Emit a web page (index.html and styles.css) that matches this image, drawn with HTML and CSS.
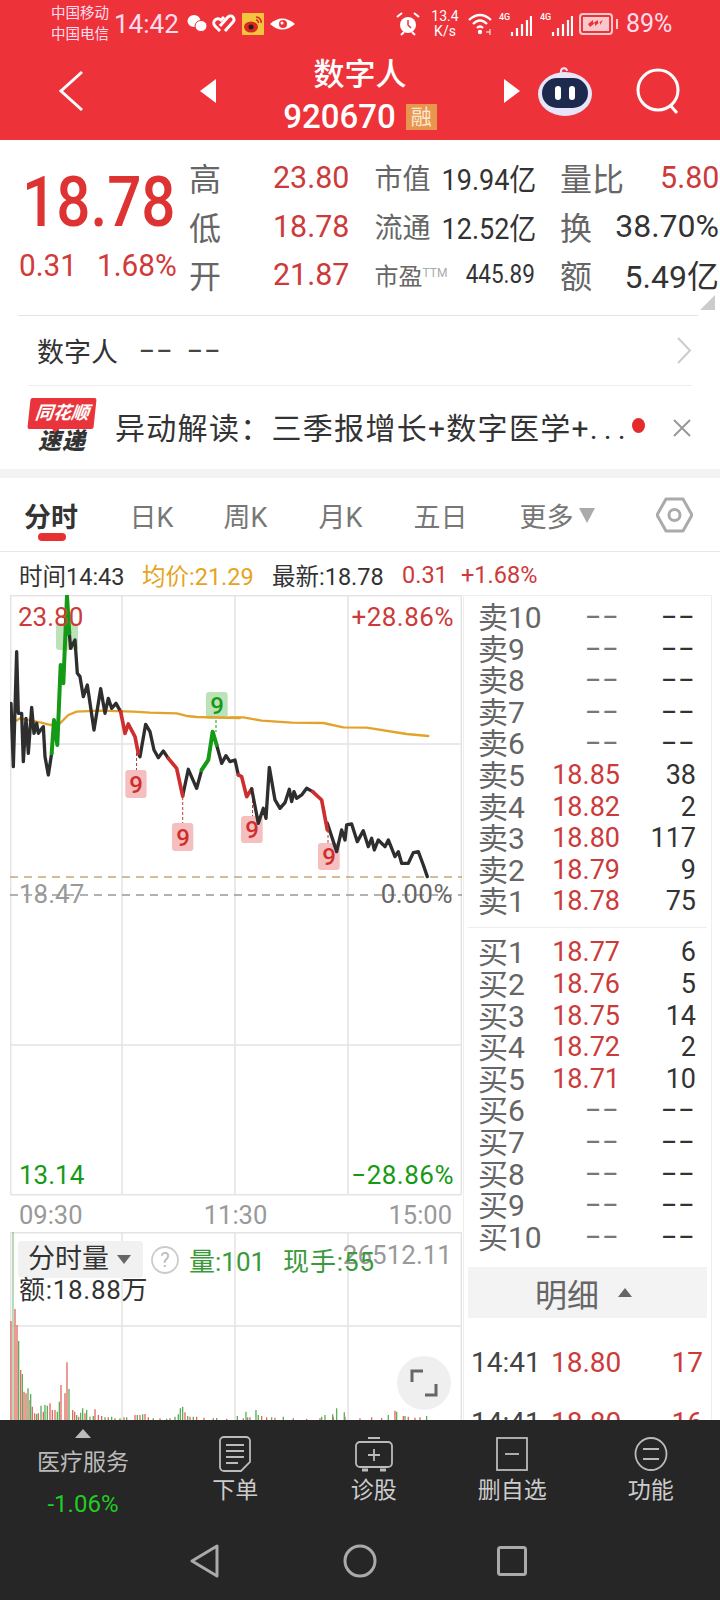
FILE: index.html
```html
<!DOCTYPE html>
<html lang="zh">
<head>
<meta charset="utf-8">
<title>数字人 920670</title>
<link rel="stylesheet" href="styles.css">
</head>
<body>
<div class="page">
<header class="top">
  <div class="status">
    <div class="carrier"><span>中国移动</span><span>中国电信</span></div>
    <span class="clock">14:42</span>
    <svg class="ic-left" width="112" height="24" viewBox="0 0 112 24">
      <ellipse cx="7" cy="9" rx="6.500" ry="6" fill="#fff"/><ellipse cx="14" cy="14" rx="6" ry="5.500" fill="#fff" stroke="#ee3239"/>
      <path d="M33 19l-5-5a4 4 0 0 1 6-6l3-3M38 19l8-9a3.500 3.500 0 0 0-5-5l-8 9" fill="none" stroke="#fff" stroke-width="3"/>
      <rect x="55" y="1" width="22" height="22" fill="#f3c53c"/><ellipse cx="64" cy="15" rx="7" ry="5.500" fill="#d8281f"/><circle cx="64" cy="15" r="2.500" fill="#222"/><path d="M69 5a5 5 0 0 1 5 6M69 8a2 2 0 0 1 2 3" fill="none" stroke="#d8281f" stroke-width="1.500"/>
      <path d="M83 12q12-11 25 0q-13 11-25 0z" fill="#fff"/><circle cx="96" cy="12" r="4" fill="#ee3239"/><circle cx="95" cy="11" r="1.500" fill="#fff"/>
    </svg>
    <svg class="ic-alarm" width="24" height="26" viewBox="0 0 24 26">
      <circle cx="12" cy="14" r="8" fill="#fff"/><path d="M1 6l5-4M23 6l-5-4M5 24l3-3M19 24l-3-3" stroke="#fff" stroke-width="2"/><path d="M12 9v5l3 3" stroke="#ee3239" stroke-width="1.500" fill="none"/>
    </svg>
    <div class="speed"><span>13.4</span><span>K/s</span></div>
    <svg class="ic-wifi" width="26" height="24" viewBox="0 0 26 24">
      <path d="M1 8q11-10 22 0M5 12q7-7 14 0M9 16q3-3 6 0" fill="none" stroke="#fff" stroke-width="2.300"/><circle cx="12" cy="20" r="2.200" fill="#fff"/><path d="M18 20h4M22 17v6" stroke="#fff" stroke-width="1"/>
    </svg>
    <div class="sig"><b>4G</b><svg width="22" height="24" viewBox="0 0 22 24"><path d="M2 24v-4M7 24v-8M12 24v-12M17 24v-16M21 24v-20" stroke="#fff" stroke-width="2.200"/></svg></div>
    <div class="sig"><b>4G</b><svg width="22" height="24" viewBox="0 0 22 24"><path d="M2 24v-4M7 24v-8M12 24v-12M17 24v-16M21 24v-20" stroke="#fff" stroke-width="2.200"/></svg></div>
    <svg class="ic-batt" width="40" height="24" viewBox="0 0 40 24">
      <rect x="1" y="2" width="32" height="20" rx="3" fill="none" stroke="#f8c9cb" stroke-width="2"/><rect x="4" y="5" width="26" height="14" fill="#f8c9cb"/><path d="M9 12l5-4v3l5-3v3l5-3-3 5v-3l-5 4v-3l-5 4z" fill="#ee3239"/><rect x="37" y="7" width="2" height="10" fill="#f8c9cb"/>
    </svg>
    <span class="pct">89%</span>
  </div>
  <div class="nav">
    <svg class="back" width="26" height="42" viewBox="0 0 26 42"><path d="M24 2L3 21l21 19" fill="none" stroke="#fff" stroke-width="3"/></svg>
    <svg class="tri-l" width="16" height="24" viewBox="0 0 16 24"><path d="M16 0v24L0 12z" fill="#fff"/></svg>
    <div class="title">
      <div class="name">数字人</div>
      <div class="code"><span>920670</span><i class="rong">融</i></div>
    </div>
    <svg class="tri-r" width="16" height="24" viewBox="0 0 16 24"><path d="M0 0v24l16-12z" fill="#fff"/></svg>
    <svg class="robot" width="54" height="52" viewBox="0 0 54 52">
      <path d="M25 9a3 3 0 1 1 4-3" fill="none" stroke="#e8e4f8" stroke-width="2"/>
      <ellipse cx="27" cy="29" rx="27" ry="22" fill="#e6e6f8"/>
      <rect x="4" y="13" width="46" height="30" rx="15" fill="#1d2a4e"/>
      <rect x="17" y="21" width="6" height="14" rx="3" fill="#fff"/><rect x="31" y="21" width="6" height="14" rx="3" fill="#fff"/>
    </svg>
    <svg class="search" width="46" height="48" viewBox="0 0 46 48"><circle cx="22" cy="22" r="20" fill="none" stroke="#fff" stroke-width="3"/><path d="M34 37l7 8" stroke="#fff" stroke-width="3"/></svg>
  </div>
</header>

<section class="quote">
  <div class="last">
    <div class="big"><span>18.78</span></div>
    <div class="chg"><span>0.31</span><span>1.68%</span></div>
  </div>
  <div class="stats">
    <div class="cell"><span class="lab">高</span><span class="val up">23.80</span></div>
    <div class="cell"><span class="lab2">市值</span><span class="val2">19.94亿</span></div>
    <div class="cell"><span class="lab">量比</span><span class="val up">5.80</span></div>
    <div class="cell"><span class="lab">低</span><span class="val up">18.78</span></div>
    <div class="cell"><span class="lab2">流通</span><span class="val2">12.52亿</span></div>
    <div class="cell"><span class="lab">换</span><span class="val">38.70%</span></div>
    <div class="cell"><span class="lab">开</span><span class="val up">21.87</span></div>
    <div class="cell"><span class="lab3">市盈<sup>TTM</sup></span><span class="val3">445.89</span></div>
    <div class="cell"><span class="lab">额</span><span class="val">5.49亿</span></div>
  </div>
  <i class="corner"></i>
</section>

<div class="concept">
  <span class="c-name">数字人</span><span class="dash">––</span><span class="dash">––</span>
  <svg class="chev" width="16" height="27" viewBox="0 0 16 27"><path d="M2 1l12 12.500L2 26" fill="none" stroke="#ccc" stroke-width="2"/></svg>
</div>

<div class="news">
  <div class="logo">
    <div class="flag"><span>同花顺</span></div>
    <div class="sudi">速递</div>
  </div>
  <span class="headline">异动解读：三季报增长+数字医学+<span class="dots">...</span></span>
  <i class="dot"></i>
  <svg class="close" width="18" height="18" viewBox="0 0 18 18"><path d="M1 1l16 16M17 1L1 17" stroke="#999" stroke-width="2"/></svg>
</div>

<nav class="tabs">
  <span class="tab on">分时</span><span class="tab t2">日K</span><span class="tab t3">周K</span><span class="tab t3">月K</span><span class="tab t4">五日</span>
  <span class="tab t5">更多<i class="down"></i></span>
  <svg class="hex" width="37" height="36" viewBox="0 0 37 36"><path d="M10 2h17l9 16-9 16H10L1 18z" fill="none" stroke="#aaa" stroke-width="3" stroke-linejoin="round"/><circle cx="18.500" cy="18" r="5.500" fill="none" stroke="#aaa" stroke-width="3"/></svg>
</nav>

<div class="info">
  <span class="i1">时间14:43</span><span class="i2">均价:21.29</span><span class="i3">最新:18.78</span><span class="i4">0.31</span><span class="i5">+1.68%</span>
</div>

<main class="board">
  <div class="charts">
    <div class="price">
      <svg class="canvas" width="452" height="601" viewBox="10 595 452 601">
        <g stroke="#e4e4e4" stroke-width="1.500" fill="none">
          <rect x="10.700" y="595.700" width="450.600" height="599"/>
          <path d="M122 595v600M235 595v600M348 595v600M10 744h452M10 1045h452"/>
        </g>
        <path d="M10 877h452" stroke="#c9a76f" stroke-width="1.500" stroke-dasharray="8 6"/>
        <path d="M10 895h452" stroke="#999" stroke-width="1.500" stroke-dasharray="8 6"/>
        <g fill="#f5bfbf">
          <rect x="125.300" y="770" width="21.300" height="28" rx="3"/>
          <rect x="172" y="823" width="21.300" height="28" rx="3"/>
          <rect x="241" y="816" width="21.700" height="27" rx="3"/>
          <rect x="318" y="843" width="21.700" height="27" rx="3"/>
        </g>
        <g fill="#bde2b9">
          <rect x="56" y="623" width="22" height="27" rx="3"/>
          <rect x="206" y="692" width="21.700" height="27" rx="3"/>
        </g>
        <path d="M136.500 753v17M182.700 797v26M252.500 800v16M328 830v13" stroke="#c8383a" stroke-width="1" stroke-dasharray="3 2" fill="none"/>
        <path d="M216 720v12" stroke="#159a15" stroke-width="1" stroke-dasharray="3 2"/>
        <g class="nine-r"><text x="136" y="793">9</text><text x="183" y="846">9</text><text x="252" y="838">9</text><text x="329" y="865">9</text></g>
        <g class="nine-g"><text x="217" y="714">9</text></g>
        <g transform="translate(0 590) scale(.3333)" fill="none" stroke-linejoin="round" stroke-linecap="round">
          <path d="M33 370L45 395L60 385L120 397L150 405L180 400L205 375L230 365L300 362L400 365L450 368L530 370L560 378L590 381L720 384" stroke="#e3a32b" stroke-width="7"/>
          <path d="M33 340L40 530L50 185L55 370L65 370L70 515L78 385L85 490L95 352L102 430L110 400L115 430L122 420L130 410L135 500L145 555L155 490M208 130L212 175L225 150L232 250L240 260L250 320L262 285L282 420L302 296L315 370L325 325L335 355L348 340L362 365M415 490L420 500L437 403L450 425L462 480L475 503L490 483L505 505M548 618L565 538L590 595L605 540M650 465L665 520L678 497L690 515L705 510L715 555" stroke="#2e2e2e" stroke-width="10"/>
          <path d="M155 490L162 390L172 465L182 225L190 280L201 18L208 130M605 540L625 510L638 425L650 465" stroke="#159a15" stroke-width="12"/>
          <circle cx="201" cy="128" r="9" fill="#159a15"/>
          <path d="M362 365L375 430L385 402L405 440L415 490M505 505L530 535L548 618M715 555L725 560L740 620L755 597" stroke="#cf2e2e" stroke-width="11"/>
        </g>
        <g transform="translate(230 590) scale(.3333)" fill="none" stroke-linejoin="round" stroke-linecap="round">
          <path d="M0 382L40 382L95 392L185 398L280 399L340 412L410 413L530 432L595 438" stroke="#e3a32b" stroke-width="7"/>
          <path d="M65 597L85 700L100 655L108 685L118 532L135 630L150 655L165 638L178 598L185 635L192 605L200 625L215 615L230 595L248 605M292 700L320 785L335 720L345 750L350 705L365 702L382 755L400 722L415 770L425 745L433 780L445 750L465 770L475 750L495 800L505 785L515 820L535 820L550 788L565 785L580 825L592 860" stroke="#2e2e2e" stroke-width="10"/>
          <path d="M248 605L275 630L292 720" stroke="#cf2e2e" stroke-width="11"/>
        </g>
      </svg>
      <span class="pl tl up2">23.80</span>
      <span class="pl tr up2">+28.86%</span>
      <span class="pl ml">18.47</span>
      <span class="pl mr">0.00%</span>
      <span class="pl bl dn">13.14</span>
      <span class="pl br dn">−28.86%</span>
    </div>
    <div class="axis"><span>09:30</span><span>11:30</span><span>15:00</span></div>
    <div class="vol">
      <svg class="canvas" width="452" height="188" viewBox="10 1232 452 188">
        <g stroke="#e4e4e4" stroke-width="1.500" fill="none">
          <path d="M10.700 1232v188M122 1232v188M235 1232v188M348 1232v188M461.300 1232v188M10 1326h452M10 1232.700h452"/>
        </g>
        <g transform="translate(0 1160) scale(.3333)" fill="none">
          <path d="M39 780V216" stroke="#6fb96f" stroke-width="3"/>
          <path stroke="#e2695f" stroke-width="4" d="M33 780V483M45 780V447M51 780V495M62 780V630M72 780V695M78 780V700M90 780V720M97 780V740M104 780V760M115 780V760M130 780V755M150 780V730M157 780V750M165 780V750M183 780V675M195 780V700M201 780V607M218 780V750M224 780V755M236 780V770M255 780V760M285 780V748M295 780V765M305 780V768M325 780V772M345 780V775M372 780V772M405 780V765M420 780V765M435 780V762M445 780V772M480 780V775M510 780V775M555 780V757M570 780V770M590 780V770M612 780V773M640 780V775M680 780V776M730 780V775M750 780V772M785 780V768M800 780V772M825 780V773M880 780V775M920 780V776M960 780V775M1000 780V770M1035 780V770M1080 780V775M1115 780V772M1145 780V774M1185 780V752M1210 780V768M1225 780V770M1245 780V773M1260 780V772"/>
          <path stroke="#5cae5c" stroke-width="4" d="M56 780V543M67 780V642M84 780V685M92 780V702M110 780V762M123 780V737M135 780V735M142 780V737M172 780V755M178 780V725M207 780V687M230 780V765M242 780V758M248 780V745M260 780V750M270 780V770M280 780V768M315 780V772M335 780V770M360 780V775M380 780V772M412 780V765M428 780V763M460 780V775M500 780V776M525 780V770M535 780V763M541 780V745M548 780V740M563 780V768M580 780V770M650 780V774M712 780V768M738 780V755M743 780V772M768 780V750M775 780V765M815 780V772M850 780V770M965 780V770M975 780V765M998 780V763M1010 780V745M1033 780V757M1165 780V765M1190 780V755M1215 780V768M1280 780V768"/>
        </g>
      </svg>
      <span class="v-total">26512.11</span>
      <div class="v-head">
        <div class="v-sel">分时量<i class="down dark"></i></div>
        <svg class="q" width="28" height="28" viewBox="0 0 28 28"><circle cx="14" cy="14" r="13" fill="none" stroke="#ccc" stroke-width="1.800"/><text x="14" y="21" text-anchor="middle">?</text></svg>
        <span class="v-g v1">量:101</span><span class="v-g v2">现手:55</span>
      </div>
      <div class="v-amt">额:18.88万</div>
      <div class="expand"><svg width="28" height="28" viewBox="0 0 28 28"><path d="M2 13V2h11M26 15v11H15" fill="none" stroke="#666" stroke-width="3"/></svg></div>
    </div>
  </div>

  <aside class="book">
    <div class="ob-group">
      <div class="ob"><span class="l">卖10</span><span class="p e">––</span><span class="q2 e">––</span></div>
      <div class="ob"><span class="l">卖9</span><span class="p e">––</span><span class="q2 e">––</span></div>
      <div class="ob"><span class="l">卖8</span><span class="p e">––</span><span class="q2 e">––</span></div>
      <div class="ob"><span class="l">卖7</span><span class="p e">––</span><span class="q2 e">––</span></div>
      <div class="ob"><span class="l">卖6</span><span class="p e">––</span><span class="q2 e">––</span></div>
      <div class="ob"><span class="l">卖5</span><span class="p">18.85</span><span class="q2">38</span></div>
      <div class="ob"><span class="l">卖4</span><span class="p">18.82</span><span class="q2">2</span></div>
      <div class="ob"><span class="l">卖3</span><span class="p">18.80</span><span class="q2">117</span></div>
      <div class="ob"><span class="l">卖2</span><span class="p">18.79</span><span class="q2">9</span></div>
      <div class="ob"><span class="l">卖1</span><span class="p">18.78</span><span class="q2">75</span></div>
    </div>
    <hr class="ob-sep">
    <div class="ob-group">
      <div class="ob"><span class="l">买1</span><span class="p">18.77</span><span class="q2">6</span></div>
      <div class="ob"><span class="l">买2</span><span class="p">18.76</span><span class="q2">5</span></div>
      <div class="ob"><span class="l">买3</span><span class="p">18.75</span><span class="q2">14</span></div>
      <div class="ob"><span class="l">买4</span><span class="p">18.72</span><span class="q2">2</span></div>
      <div class="ob"><span class="l">买5</span><span class="p">18.71</span><span class="q2">10</span></div>
      <div class="ob"><span class="l">买6</span><span class="p e">––</span><span class="q2 e">––</span></div>
      <div class="ob"><span class="l">买7</span><span class="p e">––</span><span class="q2 e">––</span></div>
      <div class="ob"><span class="l">买8</span><span class="p e">––</span><span class="q2 e">––</span></div>
      <div class="ob"><span class="l">买9</span><span class="p e">––</span><span class="q2 e">––</span></div>
      <div class="ob"><span class="l">买10</span><span class="p e">––</span><span class="q2 e">––</span></div>
    </div>
    <div class="detail-head"><span>明细</span><i class="up-tri"></i></div>
    <div class="tick"><span class="t">14:41</span><span class="tp">18.80</span><span class="tq">17</span></div>
    <div class="tick"><span class="t">14:41</span><span class="tp">18.80</span><span class="tq">16</span></div>
  </aside>
</main>

<footer class="bottom">
  <div class="actions">
    <div class="sector">
      <i class="sec-tri"></i>
      <span class="sec-name">医疗服务</span>
      <span class="sec-pct">-1.06%</span>
    </div>
    <div class="act">
      <svg width="32" height="36" viewBox="0 0 32 36"><path d="M5 1h22a4 4 0 0 1 4 4v21l-9 9H5a4 4 0 0 1-4-4V5a4 4 0 0 1 4-4z" fill="none" stroke="#bbb" stroke-width="1.800"/><path d="M7 9h18M7 15h18M7 21h18M7 27h12" stroke="#bbb" stroke-width="1.800"/></svg>
      <span>下单</span>
    </div>
    <div class="act">
      <svg width="38" height="36" viewBox="0 0 38 36"><path d="M13 2h12" stroke="#bbb" stroke-width="2"/><rect x="1" y="6" width="36" height="25" rx="4" fill="none" stroke="#bbb" stroke-width="1.800"/><path d="M19 13v12M13 19h12" stroke="#bbb" stroke-width="1.800"/><path d="M7 34h6M25 34h6" stroke="#bbb" stroke-width="3"/></svg>
      <span>诊股</span>
    </div>
    <div class="act">
      <svg width="32" height="36" viewBox="0 0 32 36"><rect x="1" y="2" width="30" height="32" fill="none" stroke="#bbb" stroke-width="1.800"/><path d="M9 18h14" stroke="#bbb" stroke-width="1.800"/></svg>
      <span>删自选</span>
    </div>
    <div class="act">
      <svg width="34" height="36" viewBox="0 0 34 36"><ellipse cx="17" cy="18" rx="15.500" ry="16" fill="none" stroke="#bbb" stroke-width="1.800"/><path d="M9 13h16M9 23h16" stroke="#bbb" stroke-width="1.800"/></svg>
      <span>功能</span>
    </div>
  </div>
  <div class="sysnav">
    <svg width="30" height="34" viewBox="0 0 30 34"><path d="M27 2v30L2 17z" fill="none" stroke="#aaa" stroke-width="3" stroke-linejoin="round"/></svg>
    <svg width="34" height="34" viewBox="0 0 34 34"><circle cx="17" cy="17" r="15" fill="none" stroke="#aaa" stroke-width="3"/></svg>
    <svg width="30" height="30" viewBox="0 0 30 30"><rect x="1.500" y="1.500" width="27" height="27" rx="2" fill="none" stroke="#aaa" stroke-width="3"/></svg>
  </div>
</footer>
</div>
</body>
</html>
```
FILE: styles.css
```css
* { box-sizing: border-box; }
html, body { margin: 0; padding: 0; background: #fff; }
body { font-family: Roboto, "Noto Sans CJK SC", sans-serif; color: #333; }
i { font-style: normal; display: block; }
.page { width: 720px; height: 1600px; overflow: hidden; display: flex; flex-direction: column; }

/* header */
.top { height: 140px; background: #ee3239; color: #fff; flex: none; }
.status { height: 47px; display: flex; align-items: center; padding-left: 51px; }
.carrier { display: flex; flex-direction: column; font-size: 14.500px; line-height: 21px; width: 63px; flex: none; color: #fde; }
.clock { font-size: 26px; width: 73px; flex: none; color: #fde; }
.ic-left { flex: none; }
.ic-alarm { flex: none; margin-left: 97px; }
.speed { display: flex; flex-direction: column; align-items: center; font-size: 14px; line-height: 15px; width: 28px; margin-left: 11px; flex: none; }
.ic-wifi { flex: none; margin-left: 9px; }
.sig { display: flex; align-items: flex-start; margin-left: 5px; width: 36px; flex: none; }
.sig b { font-size: 9px; font-weight: 500; width: 13px; flex: none; }
.sig svg { margin-left: -2px; }
.ic-batt { flex: none; margin-left: 3px; }
.pct { font-size: 25px; margin-left: 7px; flex: none; color: #fde; }
.nav { height: 93px; display: flex; align-items: center; }
.back { margin: -6px 0 0 58px; flex: none; }
.tri-l { margin: -6px 0 0 116px; flex: none; }
.title { width: 288px; flex: none; text-align: center; margin-top: 15px; }
.name { font-size: 31px; line-height: 38px; font-weight: 500; margin-top: -10px; }
.code { display: flex; justify-content: center; align-items: center; height: 40px; font-size: 33px; font-weight: 500; margin-top: 3px; margin-left: 0; }
.rong { width: 31px; height: 26px; background: #e8964e; color: #fbe9d6; font-size: 21px; line-height: 26px; font-weight: 400; margin-left: 10px; }
.tri-r { margin: -6px 0 0 0; flex: none; }
.robot { margin: -6px 0 0 18px; flex: none; }
.search { margin: -4px 0 0 44px; flex: none; }

/* quote block */
.quote { height: 176px; flex: none; position: relative; display: flex; }
.quote::after { content: ""; position: absolute; left: 18px; right: 22px; bottom: 0; height: 1.500px; background: #e4e4e4; }
.last { width: 190px; flex: none; position: relative; color: #dd3333; }
.big { font-size: 70px; line-height: 70px; font-weight: 500; margin: 27px 0 0 22px; white-space: nowrap; }
.big span { display: inline-block; transform: scaleX(.86); transform-origin: left center; }
.chg { display: flex; font-size: 32px; line-height: 36px; margin: 10px 0 0 19px; color: #d23a3a; white-space: nowrap; }
.chg span { display: inline-block; transform: scaleX(.93); transform-origin: left center; width: 78px; }
.stats { display: grid; grid-template-columns: 160px 160px 159px; column-gap: 25.500px; grid-auto-rows: 48.500px; padding-top: 13px; margin-left: -1px; }
.cell { display: flex; justify-content: space-between; align-items: center; white-space: nowrap; }
.lab { font-size: 32px; color: #666; }
.lab2 { font-size: 28px; color: #666; }
.lab3 { font-size: 24px; color: #666; }
.lab3 sup { font-size: 12px; color: #aaa; vertical-align: 8px; line-height: 0; }
.val { font-size: 32px; color: #333; }
.val.up { color: #cc3a3a; display: inline-block; transform: scaleX(.95); transform-origin: right center; }
.val2 { font-size: 30px; color: #333; display: inline-block; transform: scaleX(.9); transform-origin: right center; }
.val3 { font-size: 25px; color: #333; display: inline-block; transform: scaleX(.9); transform-origin: right center; }
.corner { position: absolute; right: 5px; top: 155px; border-style: solid; border-width: 0 0 15px 15px; border-color: transparent transparent #ccc transparent; }

.concept { height: 70px; flex: none; display: flex; align-items: center; margin: 0 28px; position: relative; border-bottom: 1.500px solid #eee; padding-left: 9px; }
.c-name { font-size: 27px; color: #333; margin-right: 21px; }
.dash { font-size: 24px; letter-spacing: 2px; width: 48px; color: #444; font-weight: 500; }
.chev { margin-left: auto; margin-right: 0; }

.news { height: 83px; flex: none; display: flex; align-items: center; padding-left: 29px; }
.logo { width: 70px; flex: none; margin-top: -2px; }
.flag { width: 66px; height: 31px; background: #e8343a; border-radius: 2px; transform: skewX(-6deg); color: #fff; text-align: center; font-size: 18px; line-height: 30px; font-weight: 700; font-style: italic; position: relative; }
.flag::after { content: ""; position: absolute; left: 24px; top: 30px; border-style: solid; border-width: 5px 4px 0; border-color: #e8343a transparent transparent; }
.sudi { font-size: 23px; line-height: 26px; font-weight: 900; font-style: italic; color: #333; text-align: center; width: 66px; letter-spacing: 1px; }
.headline { font-size: 30px; color: #333; margin: -4px 0 0 16px; letter-spacing: 1.300px; white-space: nowrap; width: 516px; flex: none; overflow: hidden; }
.dots { letter-spacing: 6px; }
.dot { width: 13px; height: 15px; border-radius: 50%; background: #e42a2a; flex: none; margin: -4px 0 0 1px; }
.close { margin-left: 28px; flex: none; }

.tabs { border-top: 9px solid #f3f3f3; height: 83px; flex: none; display: flex; align-items: center; padding-left: 24px; position: relative; border-bottom: 1.500px solid #e8e8e8; font-size: 27px; color: #777; }
.tab { flex: none; white-space: nowrap; margin-top: 2px; }
.tab.on { color: #333; font-weight: 700; width: 105.500px; position: relative; }
.tab.on::after { content: ""; position: absolute; left: 14px; top: 37px; width: 28px; height: 8px; border-radius: 4px; background: #e83030; }
.t2 { width: 94px; }
.t3 { width: 95px; }
.t4 { width: 106px; }
.t5 { width: 120px; display: flex; align-items: center; }
.down { width: 0; height: 0; border-style: solid; border-width: 15px 8px 0; border-color: #aaa transparent transparent; margin-left: 5px; }
.hex { flex: none; margin-left: auto; margin-right: 27px; }

.info { height: 43px; flex: none; display: flex; align-items: center; font-size: 23.500px; padding: 2px 0 0 19px; white-space: nowrap; }
.info span { flex: none; }
.i1 { width: 123px; color: #333; }
.i2 { width: 130px; color: #e5a420; }
.i3 { width: 130px; color: #333; }
.i4 { width: 59px; color: #cc3a3a; }
.i5 { color: #cc3a3a; }

/* charts */
.board { height: 825px; flex: none; display: flex; overflow: hidden; }
.charts { width: 453px; margin-left: 10px; flex: none; }
.price { height: 601px; position: relative; }
.canvas { display: block; }
.price .canvas, .vol .canvas { position: absolute; left: 0; top: 0; }
.nine-r text, .nine-g text { font-size: 24px; text-anchor: middle; font-family: Roboto, sans-serif; font-weight: 500; }
.nine-r text { fill: #cf2e2e; }
.nine-g text { fill: #159a15; }
.pl { position: absolute; font-size: 26px; line-height: 30px; }
.up2 { color: #cc3a3a; }
.dn { color: #159a15; }
.tl { left: 8px; top: 7px; }
.tr { right: 9px; top: 7px; letter-spacing: .5px; }
.ml { left: 9px; top: 284px; color: #999; }
.mr { right: 10px; top: 284px; color: #666; letter-spacing: .5px; }
.bl { left: 9px; top: 565px; }
.br { right: 9px; top: 565px; letter-spacing: .5px; }
.axis { height: 36px; display: flex; justify-content: space-between; align-items: center; padding: 2px 11px 0 9px; font-size: 25.500px; color: #999; }
.vol { height: 188px; position: relative; width: 452px; }
.v-head { position: relative; display: flex; align-items: center; padding: 9px 0 0 8px; }
.v-sel { width: 125px; height: 37px; background: #f1f1f1; border-radius: 4px; font-size: 27px; line-height: 37px; color: #333; padding-left: 10px; display: flex; align-items: center; flex: none; }
.down.dark { border-width: 9px 7px 0; border-color: #666 transparent transparent; margin-left: 8px; }
.q { margin-left: 8px; flex: none; }
.q text { font-size: 20px; fill: #bbb; }
.v-g { font-size: 26px; color: #3a9a3a; white-space: nowrap; flex: none; }
.v1 { margin-left: 10px; width: 94px; }
.v2 { letter-spacing: .9px; }
.v-total { position: absolute; right: 10px; top: 5px; font-size: 26px; line-height: 36px; color: #999; }
.v-amt { position: relative; font-size: 26px; line-height: 32px; color: #333; padding-left: 9px; margin-top: -4px; letter-spacing: .7px; }
.expand { position: absolute; left: 387px; top: 124px; width: 54px; height: 54px; border-radius: 50%; background: #efefef; display: flex; align-items: center; justify-content: center; }

/* order book */
.book { width: 249px; flex: none; border: 1px solid #eee; border-bottom: 0; padding-top: 6px; background: #fff; position: relative; }
.ob-group { display: flex; flex-direction: column; }
.ob { height: 31.600px; display: grid; grid-template-columns: 1fr 70px 76px; padding: 0 15px 0 14px; align-items: center; white-space: nowrap; font-size: 27px; line-height: 31.600px; }
.l { font-size: 30px; color: #666; }
.p { text-align: right; color: #cc3a3a; }
.q2 { text-align: right; color: #333; }
.e { font-size: 24px; letter-spacing: 2px; font-weight: 500; }
.p.e { color: #777; }
.ob-sep { border: 0; height: 1.500px; background: #eee; margin: 9px 4px 9px; }
.detail-head { margin: 14px 4px 0; height: 51px; background: #f3f3f3; display: flex; align-items: center; padding-left: 67px; font-size: 32px; color: #666; }
.up-tri { width: 0; height: 0; border-style: solid; border-width: 0 7px 9px; border-color: transparent transparent #666; margin-left: 19px; }
.tick { height: 60px; display: flex; align-items: center; font-size: 28px; padding-left: 7px; position: relative; top: 14px; white-space: nowrap; }
.t { width: 80px; color: #444; flex: none; }
.tp { width: 80px; color: #cc3a3a; flex: none; }
.tq { width: 72px; text-align: right; color: #cc3a3a; flex: none; }

/* bottom */
.bottom { height: 180px; flex: none; background: #262626; color: #ccc; }
.actions { height: 112px; display: grid; grid-template-columns: 166px repeat(4, 138.500px); }
.sector { display: flex; flex-direction: column; align-items: center; }
.sec-tri { width: 0; height: 0; margin-top: 9px; border-style: solid; border-width: 0 8px 9px; border-color: transparent transparent #bbb; }
.sec-name { font-size: 23px; line-height: 30px; margin-top: 10px; color: #bbb; }
.sec-pct { font-size: 24px; line-height: 30px; margin-top: 11px; color: #22cc22; }
.act { display: flex; flex-direction: column; align-items: center; padding-top: 16px; }
.act span { font-size: 23px; line-height: 30px; margin-top: 4px; }
.sysnav { height: 68px; display: flex; align-items: center; padding: 0 0 10px 190px; }
.sysnav svg { flex: none; }
.sysnav svg:nth-child(2) { margin-left: 123px; }
.sysnav svg:nth-child(3) { margin-left: 120px; }
```
